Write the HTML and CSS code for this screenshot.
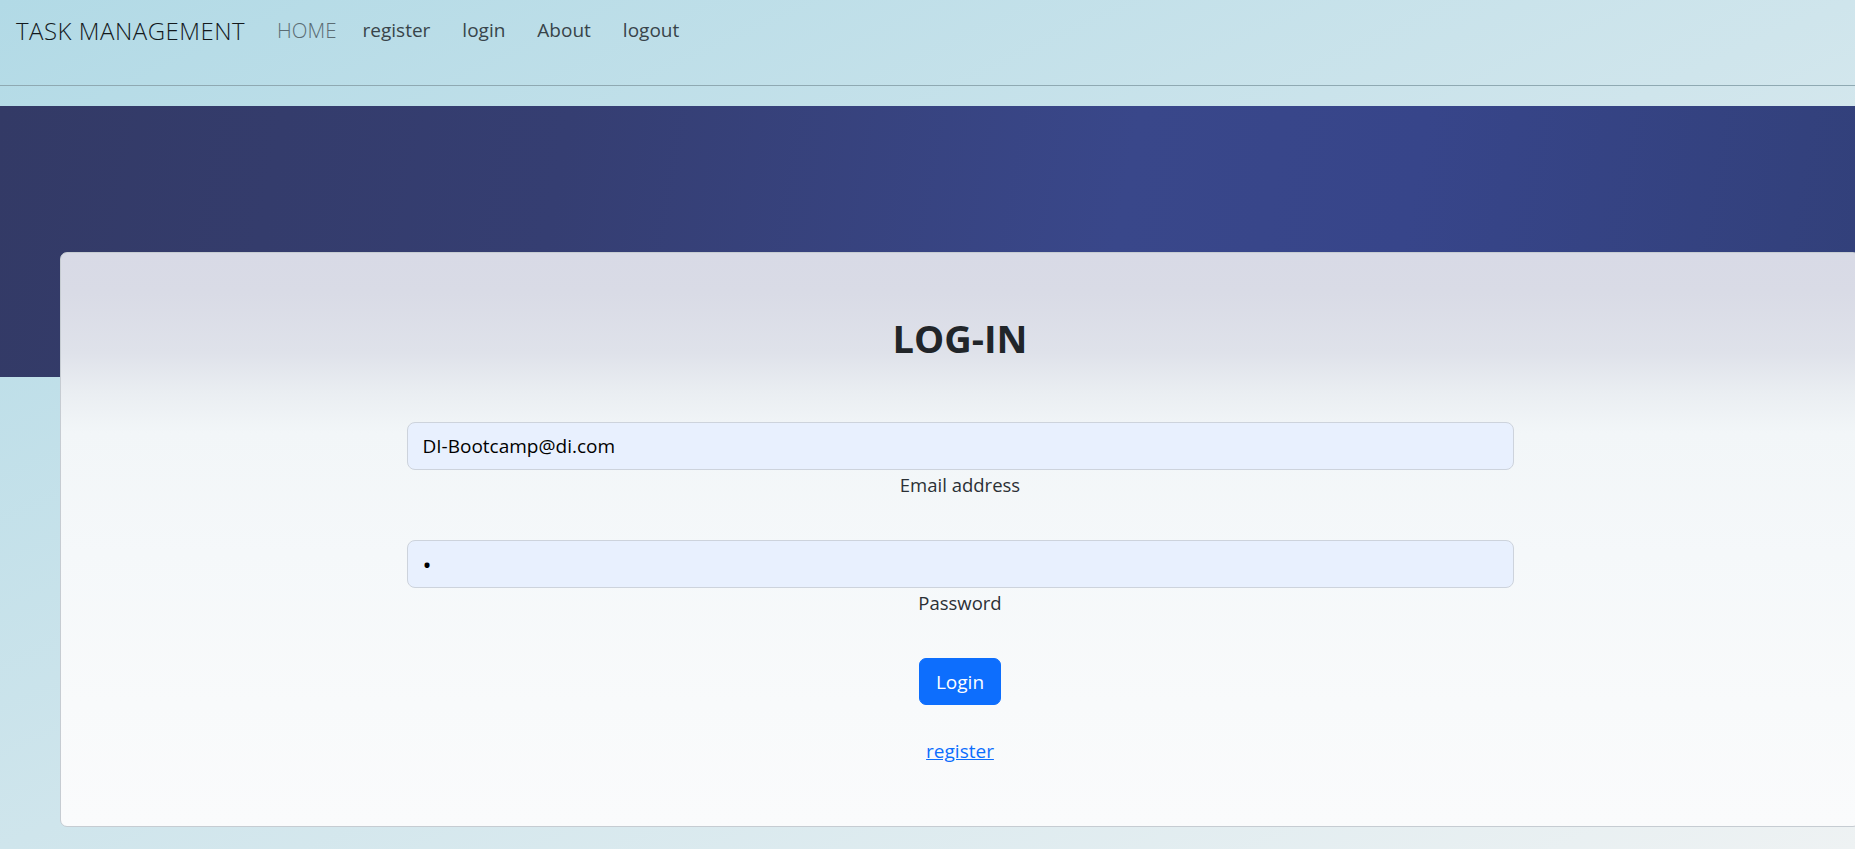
FILE: index.html
```html
<!DOCTYPE html>
<html lang="en">
<head>
<meta charset="utf-8">
<title>Task Management - Log in</title>
<link rel="stylesheet" href="styles.css">
</head>
<body>
<div class="page">
  <header class="navbar">
    <a class="brand" href="#">TASK MANAGEMENT</a>
    <nav class="nav">
      <a class="nav-link active" href="#">HOME</a>
      <a class="nav-link" href="#">register</a>
      <a class="nav-link" href="#">login</a>
      <a class="nav-link" href="#">About</a>
      <a class="nav-link" href="#">logout</a>
    </nav>
  </header>
  <div class="hero"></div>
  <main class="card">
    <h1 class="card-title">LOG-IN</h1>
    <form class="login-form">
      <div class="field">
        <input class="input" type="email" id="email" value="DI-Bootcamp@di.com">
        <label class="label" for="email">Email address</label>
      </div>
      <div class="field">
        <input class="input input-password" type="password" id="password" value="a">
        <label class="label" for="password">Password</label>
      </div>
      <button class="btn" type="button">Login</button>
      <a class="register-link" href="#">register</a>
    </form>
  </main>
</div>
</body>
</html>
```
FILE: styles.css
```css
html, body {
  margin: 0;
  padding: 0;
}
body {
  font-family: "Open Sans", "Noto Sans", sans-serif;
  color: #212529;
  min-height: 849px;
  background: linear-gradient(to bottom right, #b2dae6 0%, #cfe5ec 50%, #eef2f3 100%);
  background-attachment: fixed;
  overflow: hidden;
}
.page {
  width: 1855px;
  min-height: 849px;
  overflow: hidden;
}
.navbar {
  box-sizing: border-box;
  height: 86px;
  padding: 9px 16px 0;
  border-bottom: 1px solid #8fa9b2;
  display: flex;
  align-items: flex-start;
}
.brand {
  font-size: 24px;
  font-weight: 300;
  line-height: 36px;
  margin-top: 4px;
  margin-right: 16px;
  color: #14191d;
  text-decoration: none;
  letter-spacing: 0.5px;
}
.nav {
  display: flex;
  margin-top: 6px;
}
.nav-link {
  font-size: 19px;
  line-height: 30px;
  padding: 0 16px;
  color: #38444a;
  text-decoration: none;
}
.nav-link.active {
  color: #5b6c73;
  font-weight: 300;
  font-size: 20.5px;
  padding-right: 10px;
}
.hero {
  margin-top: 20px;
  height: 271px;
  background: linear-gradient(100deg, #333a66 0%, #353e72 30%, #39478a 60%, #37458a 75%, #32407a 100%);
}
.card {
  position: relative;
  box-sizing: border-box;
  width: 1800px;
  margin: -125px 0 0 60px;
  height: 575px;
  border: 1px solid #c6ccd2;
  border-radius: 7px;
  background: linear-gradient(180deg, #d8dae6 0px, #d9dbe6 40px, #dfe2ea 100px, #eaeef2 140px, #f2f6f8 180px, #f5f8fa 300px, #f8fafb 450px, #fafbfc 100%);
  padding: 61px 0 0;
  text-align: center;
}
.card-title {
  margin: 0 0 60px;
  font-size: 38px;
  font-weight: 700;
  line-height: 48px;
  color: #212529;
}
.login-form {
  width: 1107px;
  margin: 0 auto;
  display: flex;
  flex-direction: column;
  align-items: center;
}
.field {
  width: 100%;
  display: flex;
  flex-direction: column;
  align-items: center;
  margin-bottom: 40px;
}
.input {
  box-sizing: border-box;
  width: 100%;
  height: 48px;
  padding: 8px 15px;
  font-family: "Open Sans", "Noto Sans", sans-serif;
  font-size: 19px;
  color: #000;
  background: #e8f0fe;
  border: 1px solid #cdd3dc;
  border-radius: 8px;
  outline: none;
}
.input-password {
  font-size: 24px;
}
.label {
  font-size: 18.5px;
  line-height: 30px;
  color: #2b3035;
}
.btn {
  box-sizing: border-box;
  height: 47px;
  padding: 0 16px;
  font-family: "Open Sans", "Noto Sans", sans-serif;
  font-size: 19px;
  color: #fff;
  background: #0d6efd;
  border: 1px solid #0d6efd;
  border-radius: 7px;
  cursor: pointer;
}
.register-link {
  margin-top: 31px;
  font-size: 19px;
  line-height: 30px;
  color: #0d6efd;
  text-decoration: underline;
}
```
